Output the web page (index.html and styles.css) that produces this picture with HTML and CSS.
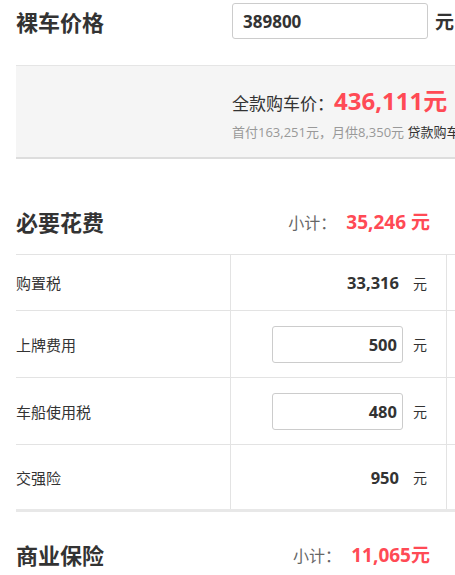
FILE: index.html
```html
<!DOCTYPE html>
<html lang="zh-CN">
<head>
    <meta charset="UTF-8">
    <meta name="viewport" content="width=device-width, initial-scale=1.0">
    <title>购车计算器</title>
    <link rel="stylesheet" href="styles.css">
</head>
<body>

<div class="page">
    <div class="price-row">
        <h2 class="title">裸车价格</h2>
        <div class="price-input">
            <input type="text" value="389800">
            <span class="unit-big">元</span>
        </div>
    </div>

    <div class="total-box">
        <div class="total-line">全款购车价：<span class="total-num">436,111元</span></div>
        <div class="loan-line">首付163,251元，月供8,350元 <span class="loan-link">贷款购车</span></div>
    </div>

    <div class="section-head">
        <h2 class="title">必要花费</h2>
        <div class="subtotal">小计： <span class="sub-num">35,246 元</span></div>
    </div>

    <div class="fee-table">
        <div class="fee-row">
            <div class="fee-name">购置税</div>
            <div class="fee-value"><b>33,316</b><span class="unit">元</span></div>
            <div class="fee-extra"></div>
        </div>
        <div class="fee-row tall">
            <div class="fee-name">上牌费用</div>
            <div class="fee-value"><input type="text" value="500"><span class="unit">元</span></div>
            <div class="fee-extra"></div>
        </div>
        <div class="fee-row tall">
            <div class="fee-name">车船使用税</div>
            <div class="fee-value"><input type="text" value="480"><span class="unit">元</span></div>
            <div class="fee-extra"></div>
        </div>
        <div class="fee-row last">
            <div class="fee-name">交强险</div>
            <div class="fee-value"><b>950</b><span class="unit">元</span></div>
            <div class="fee-extra"></div>
        </div>
    </div>

    <div class="section-head insurance">
        <h2 class="title">商业保险</h2>
        <div class="subtotal">小计： <span class="sub-num">11,065元</span></div>
    </div>
</div>

</body>
</html>
```

FILE: styles.css
```css
body {
    margin: 0;
    font-family: "Open Sans", "Noto Sans CJK SC", sans-serif;
    color: #333;
    background: #fff;
    overflow: hidden;
}
.page {
    width: 640px;
    padding-left: 16px;
}
.title {
    margin: 0;
    font-size: 22px;
    font-weight: bold;
    color: #333;
}
.price-row {
    display: grid;
    grid-template-columns: 216px 1fr;
    align-items: center;
    height: 42px;
}
.price-input {
    display: flex;
    align-items: center;
}
.price-input input {
    width: 196px;
    height: 36px;
    box-sizing: border-box;
    border: 1px solid #ccc;
    border-radius: 3px;
    padding: 0 10px;
    font-family: inherit;
    font-size: 17px;
    font-weight: bold;
    color: #333;
}
.unit-big {
    margin-left: 7px;
    font-size: 19px;
    font-weight: bold;
}
.total-box {
    margin-top: 23px;
    height: 91px;
    background: #f5f5f5;
    border-top: 1px solid #e5e5e5;
    border-bottom: 2px solid #ddd;
    padding-left: 216px;
}
.total-line {
    margin-top: 20px;
    font-size: 17px;
    line-height: 30px;
    color: #333;
}
.total-num {
    font-size: 24px;
    font-weight: bold;
    color: #ff4a55;
}
.loan-line {
    margin-top: 3px;
    font-size: 13px;
    color: #999;
}
.loan-link {
    color: #333;
}
.section-head {
    display: flex;
    align-items: center;
    width: 414px;
    justify-content: space-between;
    margin-top: 45px;
    height: 34px;
}
.subtotal {
    font-size: 16px;
    color: #666;
}
.sub-num {
    margin-left: 6px;
    font-size: 19px;
    font-weight: bold;
    color: #ff4a55;
}
.fee-table {
    margin-top: 16px;
    border-top: 1px solid #e3e3e3;
    border-bottom: 3px solid #e8e8e8;
}
.fee-row {
    display: grid;
    grid-template-columns: 214px 217px 1fr;
    height: 55px;
    border-bottom: 1px solid #e3e3e3;
}
.fee-row.tall {
    height: 66px;
}
.fee-row.last {
    height: 64px;
    border-bottom: none;
}
.fee-name {
    display: flex;
    align-items: center;
    font-size: 15px;
    color: #333;
}
.fee-value {
    display: flex;
    align-items: center;
    justify-content: flex-end;
    border-left: 1px solid #e3e3e3;
    border-right: 1px solid #e3e3e3;
    padding-right: 19px;
    font-size: 16.5px;
}
.fee-value b {
    font-weight: bold;
}
.fee-value input {
    width: 131px;
    height: 37px;
    margin-right: -4px;
    box-sizing: border-box;
    border: 1px solid #ccc;
    border-radius: 3px;
    padding: 0 5px;
    text-align: right;
    font-family: inherit;
    font-size: 16.5px;
    font-weight: bold;
    color: #333;
}
.unit {
    margin-left: 14px;
    font-size: 14px;
    color: #333;
}
.section-head.insurance {
    margin-top: 25px;
}
```
